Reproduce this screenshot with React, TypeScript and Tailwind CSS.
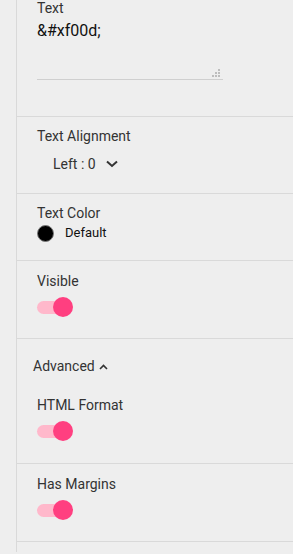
import React from "react";

function Switch() {
  return (
    <div className="relative w-[36px] h-[20px] mt-[6px]">
      <div className="absolute left-0 top-[4px] w-[34px] h-[13px] rounded-full bg-[#ffb8cb]" />
      <div className="absolute left-[16px] top-0 w-[20px] h-[20px] rounded-full bg-[#ff3f80]" />
    </div>
  );
}

export default function App() {
  const label = "text-[14px] leading-[20px] text-[#333333]";
  const section = "box-border border-b border-[#d9d9d9]";
  return (
    <div
      className="w-[293px] h-[554px] bg-[#eeeeee] flex overflow-hidden"
      style={{ fontFamily: "Roboto, 'Liberation Sans', sans-serif" }}
    >
      <div className="w-[16px] shrink-0" />
      <div className="flex-1 h-[552px] border-l border-[#d9d9d9] flex flex-col">
        {/* Text */}
        <div className={`${section} h-[117px] pl-[20px]`}>
          <div className="text-[14px] leading-[16px] text-[#333333]">Text</div>
          <div className="relative mt-[3px] w-[186px] h-[61px] border-b border-[#cfcfcf]">
            <div className="text-[16px] leading-[24px] text-[#111111]">&amp;#xf00d;</div>
            <svg
              className="absolute right-[3px] bottom-[2px]"
              width="8"
              height="8"
              viewBox="0 0 8 8"
            >
              <rect x="6" y="0" width="2" height="2" fill="#bdbdbd" />
              <rect x="3" y="3" width="2" height="2" fill="#bdbdbd" />
              <rect x="6" y="3" width="2" height="2" fill="#bdbdbd" />
              <rect x="0" y="6" width="2" height="2" fill="#bdbdbd" />
              <rect x="3" y="6" width="2" height="2" fill="#bdbdbd" />
              <rect x="6" y="6" width="2" height="2" fill="#bdbdbd" />
            </svg>
          </div>
        </div>

        {/* Text Alignment */}
        <div className={`${section} h-[77px] pt-[9px] pl-[20px]`}>
          <div className={label}>Text Alignment</div>
          <div className="mt-[8px] pl-[16px] flex items-center">
            <span className={label}>Left : 0</span>
            <svg className="ml-[10px]" width="12" height="8" viewBox="0 0 12 8">
              <path d="M1 1.5 L6 6 L11 1.5" fill="none" stroke="#333333" strokeWidth="2" />
            </svg>
          </div>
        </div>

        {/* Text Color */}
        <div className={`${section} h-[67px] pt-[9px] pl-[20px]`}>
          <div className={label}>Text Color</div>
          <div className="mt-[1px] flex items-center h-[18px]">
            <div className="w-[17px] h-[17px] rounded-full bg-black border border-[#7a7a7a]" />
            <span className="ml-[11px] text-[13px] leading-[18px] text-[#111111]">Default</span>
          </div>
        </div>

        {/* Visible */}
        <div className={`${section} h-[78px] pt-[10px] pl-[20px]`}>
          <div className={label}>Visible</div>
          <Switch />
        </div>

        {/* Advanced */}
        <div className={`${section} h-[125px] pt-[17px]`}>
          <div className="pl-[16px] flex items-center">
            <span className={label}>Advanced</span>
            <svg className="ml-[4px] mt-[2px]" width="9" height="6" viewBox="0 0 9 6">
              <path d="M1 5 L4.5 1.5 L8 5" fill="none" stroke="#333333" strokeWidth="1.6" />
            </svg>
          </div>
          <div className="mt-[19px] pl-[20px]">
            <div className={label}>HTML Format</div>
            <Switch />
          </div>
        </div>

        {/* Has Margins */}
        <div className={`${section} h-[78px] pt-[10px] pl-[20px]`}>
          <div className={label}>Has Margins</div>
          <Switch />
        </div>
      </div>
    </div>
  );
}
